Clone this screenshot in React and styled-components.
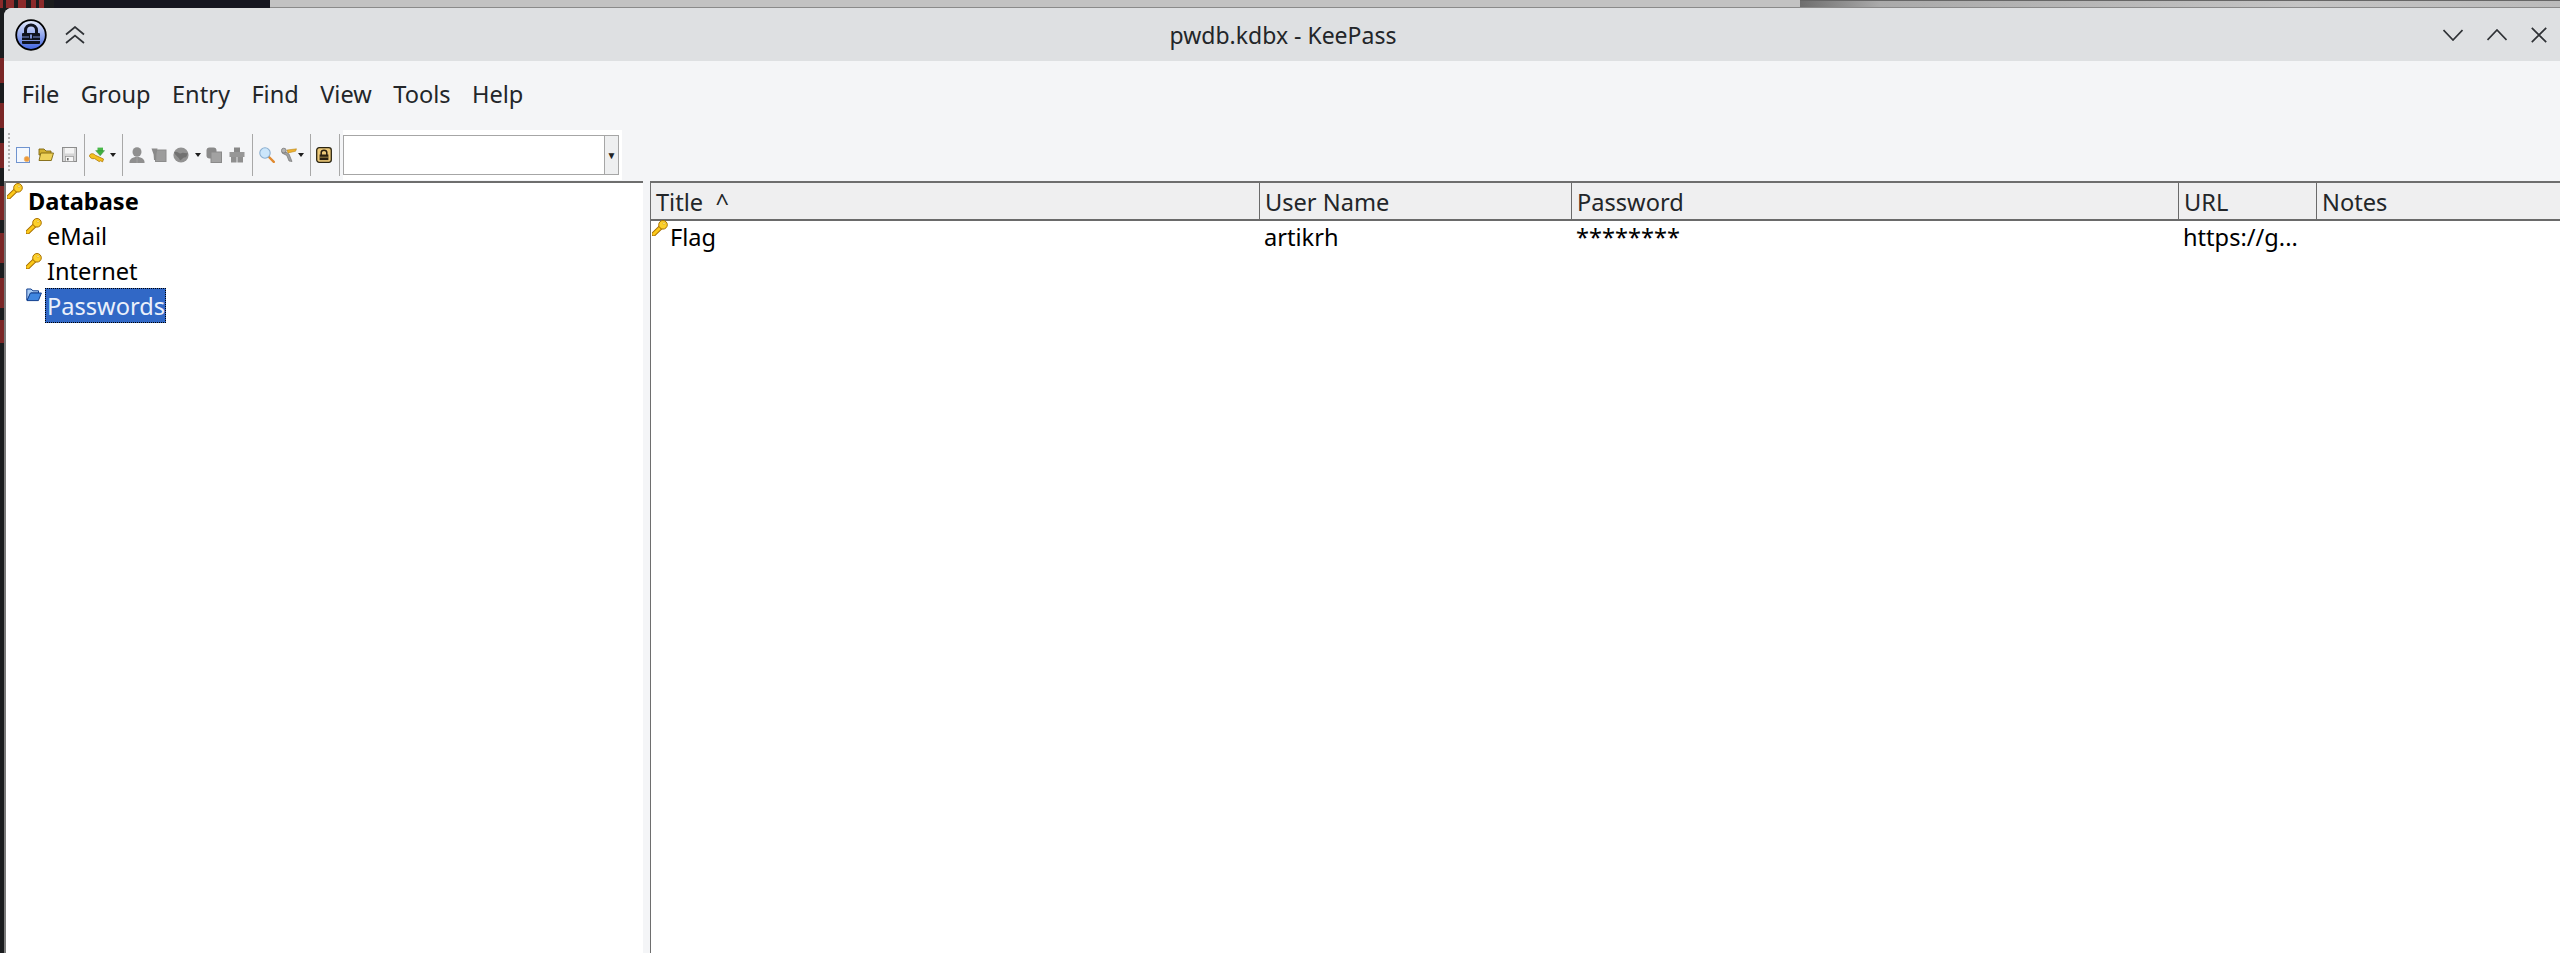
import React from "react";
import styled, { createGlobalStyle } from "styled-components";

const Global = createGlobalStyle`
  html, body { margin: 0; padding: 0; background: #16161f; overflow: hidden; }
  * { box-sizing: border-box; }
  body { font-family: "Noto Sans", sans-serif; }
`;

const Desk = styled.div`
  width: 2560px; height: 953px; overflow: hidden; display: flex; flex-direction: column;
  background: #1a1c1e;
`;
const TopStrip = styled.div`
  height: 8px; flex: none; display: flex;
`;
const StripDark = styled.div`
  width: 270px; flex: none;
  background: linear-gradient(90deg, #8c2a2a 0 3px, #1a1c1e 3px 6px, #8c2a2a 6px 14px, #1a1c1e 14px 18px, #8c2a2a 18px 26px, #1a1c1e 26px 31px, #8c2a2a 31px 36px, #1a1c1e 36px 39px, #8c2a2a 39px 44px, #1a1c1e 44px 54px, #15161f 54px);
`;
const StripGrey = styled.div`
  width: 1530px; flex: none; background: #c2c2c2; border-bottom: 1px solid #8a8a8a;
`;
const StripBlur = styled.div`
  flex: 1; background: linear-gradient(90deg, #6e6e6e 0, #aaa 80px, #c4c4c4 500px, #bbb 100%);
  border-top: 1px solid #666; border-bottom: 1px solid #8a8a8a;
`;
const Body = styled.div`
  flex: 1; display: flex; min-height: 0;
`;
const LeftEdge = styled.div`
  width: 4px; flex: none;
  background: linear-gradient(180deg,
    #1a1c1e 0 50px, #7a2626 50px 75px, #1a1c1e 75px 95px, #7a2626 95px 120px, #1a1c1e 120px 135px,
    #7a2626 135px 160px, #1a1c1e 160px 178px, #7a2626 178px 212px, #1a1c1e 212px 225px, #7a2626 225px 255px,
    #1a1c1e 255px 270px, #7a2626 270px 300px, #1a1c1e 300px 312px, #7a2626 312px 335px, #1a1c1e 335px);
`;
const Win = styled.div`
  flex: 1; min-width: 0; display: flex; flex-direction: column; background: #f4f5f7;
  border-top-left-radius: 8px; overflow: hidden;
`;
const TitleBar = styled.div`
  height: 53px; flex: none; background: #dee0e2; position: relative;
  display: flex; align-items: center; justify-content: space-between;
  padding: 0 13px 0 11px; color: #232629;
`;
const TitleText = styled.div`
  position: absolute; left: 0; right: 0; top: 0; bottom: 0; display: flex; align-items: center;
  justify-content: center; font-size: 23px; padding-left: 2px;
`;
const Btns = styled.div`
  display: flex; align-items: center; gap: ${p => p.$gap}px; position: relative; z-index: 1;
`;
const MenuBar = styled.div`
  height: 50px; margin-top: 10px; flex: none; display: flex; align-items: flex-start;
  padding: 8px 0 0 7px;
`;
const MenuItem = styled.div`
  font-size: 23.6px; color: #232629; padding: 0 10.7px; line-height: 30px;
`;
const ToolBar = styled.div`
  height: 50px; margin-top: 9px; flex: none; display: flex; align-items: center; padding-left: 4px;
`;
const Grip = styled.div`
  width: 2px; height: 38px; border-left: 2px dotted #b4b4b4; margin-right: 6px; position: relative; top: -3px;
`;
const Sep = styled.div`
  width: 1px; height: 42px; background: #a8a8a8; margin: 0 ${p => p.$r}px 0 ${p => p.$l}px; flex: none;
`;
const Tool = styled.div`
  width: 16px; height: 16px; margin-right: ${p => p.$m ?? 0}px; flex: none;
`;
const Caret = styled.div`
  width: 0; height: 0; border: 3px solid transparent; border-top: 4px solid #1e1e1e; border-bottom: 0;
  margin: 0 ${p => p.$r}px 0 ${p => p.$l}px; flex: none;
`;
const SearchWrap = styled.div`
  width: 279px; height: 50px; margin-left: 3px; background: #fff; padding: 5px 3px 5px 0; flex: none;
  display: flex;
`;
const Search = styled.div`
  flex: 1; border: 1px solid #a6a6a6; display: flex; justify-content: flex-end; background: #fff;
`;
const SearchArrow = styled.div`
  width: 14px; background: #eeeff0; border-left: 1px solid #a6a6a6; display: flex;
  align-items: center; justify-content: center; font-size: 10px; color: #222;
`;
const Panes = styled.div`
  flex: 1; min-height: 0; display: flex; margin-top: 1px; background: #f4f5f7;
`;
const TreePane = styled.div`
  width: 639px; flex: none; background: #fff; border-top: 2px solid #6e6e6e; border-left: 2px solid #7a7a7a;
  color: #000;
`;
const TreeRow = styled.div`
  height: 35px; display: flex; align-items: flex-start; padding-left: ${p => p.$indent}px;
  font-size: 23.6px; font-weight: ${p => p.$bold ? 700 : 400};
`;
const TreeIcon = styled.div`
  width: 16px; height: 16px; flex: none; margin-right: ${p => p.$m}px;
`;
const TreeLabel = styled.div`
  padding: 0 1px 0 2px; height: 35px; line-height: 37px;
  ${p => p.$sel && `background: #3168c6; color: #eaf0fb; outline: 1px dotted #000; outline-offset: -1px;`}
`;
const ListPane = styled.div`
  flex: 1; min-width: 0; margin-left: 7px; background: #fff; border-top: 2px solid #6e6e6e; border-left: 1px solid #6e6e6e;
  display: flex; flex-direction: column;
`;
const cols = "609px 312px 607px 138px 1fr";
const Head = styled.div`
  height: 38px; flex: none; background: #efeff0; border-bottom: 2px solid #6a6a6a;
  display: grid; grid-template-columns: ${cols};
`;
const HeadCell = styled.div`
  font-size: 23.6px; line-height: 38px; color: #232629; padding-left: 5px; white-space: pre;
  border-right: 1px solid #6a6a6a;
  &:last-child { border-right: 0; }
`;
const Row = styled.div`
  height: 35px; display: grid; grid-template-columns: ${cols}; font-size: 23.6px; line-height: 33px; color: #000;
`;
const Cell = styled.div`
  padding-left: 4px; white-space: nowrap; display: flex;
`;
const RowIcon = styled.div`
  width: 16px; height: 16px; flex: none; margin: -1px 2px 0 -3px;
`;

const Key = () => (
  <svg width="16" height="16" viewBox="0 0 16 16" style={{ display: "block" }}>
    <path d="M1.8 14 L9 7" stroke="#a87000" strokeWidth="4.8" strokeLinecap="round" />
    <path d="M1.8 14 L9 7" stroke="#fbc81a" strokeWidth="3" strokeLinecap="round" />
    <circle cx="11" cy="4.8" r="4.3" fill="#fdd02a" stroke="#a87000" strokeWidth="1" />
    <circle cx="12" cy="3.6" r="1" fill="#fff2b0" stroke="#c89000" strokeWidth=".4" />
  </svg>
);
const BlueFolder = () => (
  <svg width="16" height="14" viewBox="0 0 16 14" style={{ display: "block" }}>
    <path d="M.8 1 H5 L7 2.8 H12.5 V5 H5 L1.5 12 H.8 Z" fill="#a9ccf5" stroke="#123f8e" strokeWidth="1" />
    <path d="M4.4 5 H15.4 L12.4 12.6 H1 Z" fill="#3f86e0" stroke="#123f8e" strokeWidth="1" />
  </svg>
);
const LockLogo = () => (
  <svg width="32" height="32" viewBox="0 0 32 32" style={{ display: "block" }}>
    <defs>
      <linearGradient id="lg" x1="0" y1="0" x2="0" y2="1">
        <stop offset="0" stopColor="#e6ecfb" />
        <stop offset="1" stopColor="#3f63e0" />
      </linearGradient>
    </defs>
    <circle cx="16" cy="16" r="14.8" fill="url(#lg)" stroke="#000" strokeWidth="1.8" />
    <path d="M10.5 15 V11.5 C10.5 4 21.5 4 21.5 11.5 V15" fill="none" stroke="#10131f" strokeWidth="3" />
    <rect x="7" y="14" width="18" height="11" rx="1" fill="#0f1320" />
    <path d="M7 18 H14 M18 18 H25 M7 21.5 H25" stroke="#7d92d8" strokeWidth="1" />
    <rect x="15" y="15.5" width="2" height="4" fill="#7d92d8" />
  </svg>
);
const stroke = { fill: "none", stroke: "#2f3236", strokeWidth: 1.7 };
const Shade = () => (
  <svg width="20" height="18" viewBox="0 0 20 18" style={{ display: "block" }}>
    <path d="M1 8.5 L10 1 L19 8.5 M1 17 L10 9.5 L19 17" {...stroke} />
  </svg>
);
const Min = () => (
  <svg width="20" height="12" viewBox="0 0 20 12" style={{ display: "block" }}>
    <path d="M.5 1 L10 11 L19.5 1" {...stroke} />
  </svg>
);
const Max = () => (
  <svg width="20" height="12" viewBox="0 0 20 12" style={{ display: "block" }}>
    <path d="M.5 11 L10 1 L19.5 11" {...stroke} />
  </svg>
);
const Close = () => (
  <svg width="16" height="16" viewBox="0 0 16 16" style={{ display: "block" }}>
    <path d="M.8 .8 L15.2 15.2 M15.2 .8 L.8 15.2" {...stroke} />
  </svg>
);
const I = ({ children }) => (
  <svg width="16" height="16" viewBox="0 0 16 16" style={{ display: "block" }}>{children}</svg>
);
const NewDb = () => (<I>
  <rect x=".5" y=".5" width="13" height="15" fill="#f4f8fe" stroke="#6f93cf" />
  <circle cx="10.8" cy="12" r="2.6" fill="#f09a38" stroke="#e8b878" strokeWidth=".8" />
</I>);
const OpenDb = () => (<I>
  <path d="M1 2 H6 L8 4 H13 V8 H1 Z" fill="#d2b030" stroke="#7d6510" strokeWidth=".9" />
  <path d="M1 13.5 L2.8 6 H15.5 L13.3 13.5 Z" fill="#eed25a" stroke="#7d6510" strokeWidth=".9" />
</I>);
const SaveDb = () => (<I>
  <rect x=".5" y=".5" width="14" height="14" fill="#d5d5d5" stroke="#8d8d8d" />
  <rect x="3" y="1" width="9" height="5.5" fill="#f4f4f4" />
  <rect x="3.5" y="9.5" width="8" height="5" fill="#f6f6f6" stroke="#888" strokeWidth=".6" />
  <rect x="5" y="11" width="1.6" height="2.4" fill="#666" />
</I>);
const AddKey = () => (<I>
  <path d="M.5 8.3 C2 5.8 5 6.6 6.2 8.2 L14.5 12 L13.6 14.8 L11.6 13.8 L10.2 14.6 L5.6 11.6 C3.4 12.2 .3 11 .5 8.3 Z" fill="#f5c020" stroke="#b07800" strokeWidth=".8" />
  <rect x="8.5" y=".6" width="5.5" height="3.6" fill="#48b848" />
  <path d="M6.6 3.6 L11.2 8.8 L15.6 3.6 Z" fill="#40b040" stroke="#2c8030" strokeWidth=".4" />
</I>);
const Gray1 = () => (<I>
  <ellipse cx="8" cy="5" rx="4.5" ry="4.8" fill="#8f8f8f" />
  <path d="M.5 16 C-.5 8 16.5 8 15.5 16 Z" fill="#8f8f8f" />
  <path d="M8 9.5 V16" stroke="#a4a4a4" strokeWidth=".8" />
</I>);
const Gray2 = () => (<I>
  <rect x="4.5" y="3" width="10.5" height="11.5" fill="#9c9c9c" stroke="#8c8c8c" />
  <path d="M.5 1.5 H6.5 L5.4 7.5 L5.2 13 H3 L2.6 7.5 Z" fill="#8a8a8a" />
</I>);
const Globe = () => (<I>
  <circle cx="8" cy="8" r="7.6" fill="#929292" />
  <path d="M1 5.5 C4 3 6 8 9 6 C11 5 13 7 15 6 L13 10.5 C10 9.5 9 13 7 13.5 C6.2 10 3 9.5 1 5.5 Z" fill="#717171" />
</I>);
const Copy = () => (<I>
  <rect x=".5" y=".5" width="10" height="11" rx="3" fill="#8a8a8a" />
  <rect x="5" y="5" width="10.5" height="10.5" fill="#a2a2a2" stroke="#8a8a8a" />
</I>);
const Puzzle = () => (<I>
  <rect x="5" y=".5" width="6" height="5" fill="#888" />
  <rect x=".5" y="5" width="15" height="5" fill="#979797" />
  <path d="M2 10 H7.6 V15.5 H2 Z M8.4 10 H14 V15.5 H8.4 Z" fill="#8f8f8f" />
</I>);
const Find = () => (<I>
  <path d="M9.5 9.5 L14.8 14.8" stroke="#e08a30" strokeWidth="2.4" strokeLinecap="round" />
  <circle cx="6" cy="6" r="5.2" fill="#cbe6fb" stroke="#8aaed0" strokeWidth="1.1" />
</I>);
const Keys = () => (<I>
  <path d="M1.5 3 L8 7 L11 14.5 L8 14 L5.8 8.5 L1 6 Z" fill="#a0a0a0" stroke="#777" strokeWidth=".7" />
  <circle cx="2.8" cy="3.6" r="2.4" fill="#b2b2b2" stroke="#777" strokeWidth=".8" />
  <path d="M6 3 L15.5 1.8 L14.6 4.2 L7 6 Z" fill="#eeb130" stroke="#b07c10" strokeWidth=".5" />
</I>);
const Lock = () => (<I>
  <rect x=".7" y=".7" width="14.6" height="14.6" rx="2.5" fill="#edc979" stroke="#2a2412" strokeWidth="1.3" />
  <path d="M5.2 8 V5.6 C5.2 2.4 10.8 2.4 10.8 5.6 V8" fill="none" stroke="#2a2010" strokeWidth="1.5" />
  <rect x="3.6" y="7.5" width="8.8" height="5.6" fill="#2a2010" />
  <path d="M3.6 10.2 H12.4" stroke="#b89a50" strokeWidth=".8" />
</I>);

const menus = ["File", "Group", "Entry", "Find", "View", "Tools", "Help"];

export default function App() {
  return (
    <Desk>
      <Global />
      <TopStrip>
        <StripDark />
        <StripGrey />
        <StripBlur />
      </TopStrip>
      <Body>
        <LeftEdge />
        <Win>
          <TitleBar>
            <TitleText>pwdb.kdbx - KeePass</TitleText>
            <Btns $gap={18}>
              <LockLogo />
              <Shade />
            </Btns>
            <Btns $gap={24}>
              <Min />
              <Max />
              <Close />
            </Btns>
          </TitleBar>
          <MenuBar>
            {menus.map(m => <MenuItem key={m}>{m}</MenuItem>)}
          </MenuBar>
          <ToolBar>
            <Grip />
            <Tool $m={6}><NewDb /></Tool>
            <Tool $m={8}><OpenDb /></Tool>
            <Tool><SaveDb /></Tool>
            <Sep $l={6} $r={4} />
            <Tool><AddKey /></Tool>
            <Caret $l={5} $r={6} />
            <Sep $l={0} $r={6} />
            <Tool $m={6}><Gray1 /></Tool>
            <Tool $m={6}><Gray2 /></Tool>
            <Tool><Globe /></Tool>
            <Caret $l={6} $r={5} />
            <Tool $m={7}><Copy /></Tool>
            <Tool><Puzzle /></Tool>
            <Sep $l={7} $r={6} />
            <Tool $m={6}><Find /></Tool>
            <Tool><Keys /></Tool>
            <Caret $l={1} $r={6} />
            <Sep $l={0} $r={5} />
            <Tool><Lock /></Tool>
            <Sep $l={7} $r={0} />
            <SearchWrap>
              <Search>
                <SearchArrow>▼</SearchArrow>
              </Search>
            </SearchWrap>
          </ToolBar>
          <Panes>
            <TreePane>
              <TreeRow $indent={1} $bold>
                <TreeIcon $m={3}><Key /></TreeIcon>
                <TreeLabel>Database</TreeLabel>
              </TreeRow>
              <TreeRow $indent={20}>
                <TreeIcon $m={3}><Key /></TreeIcon>
                <TreeLabel>eMail</TreeLabel>
              </TreeRow>
              <TreeRow $indent={20}>
                <TreeIcon $m={3}><Key /></TreeIcon>
                <TreeLabel>Internet</TreeLabel>
              </TreeRow>
              <TreeRow $indent={20}>
                <TreeIcon $m={3}><BlueFolder /></TreeIcon>
                <TreeLabel $sel>Passwords</TreeLabel>
              </TreeRow>
            </TreePane>
            <ListPane>
              <Head>
                <HeadCell>Title  ^</HeadCell>
                <HeadCell>User Name</HeadCell>
                <HeadCell>Password</HeadCell>
                <HeadCell>URL</HeadCell>
                <HeadCell>Notes</HeadCell>
              </Head>
              <Row>
                <Cell><RowIcon><Key /></RowIcon>Flag</Cell>
                <Cell>artikrh</Cell>
                <Cell>********</Cell>
                <Cell>https://g...</Cell>
                <Cell />
              </Row>
            </ListPane>
          </Panes>
        </Win>
      </Body>
    </Desk>
  );
}
